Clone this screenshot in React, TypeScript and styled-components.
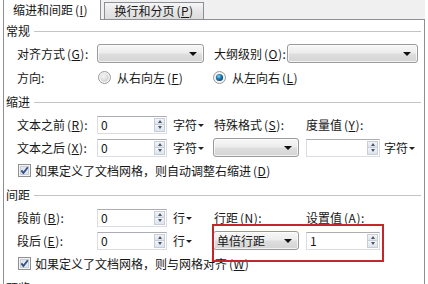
import React, { FC, ReactNode } from 'react';
import styled, { createGlobalStyle } from 'styled-components';

const GlobalStyle = createGlobalStyle`
  html, body {
    margin: 0;
    padding: 0;
    background: #ffffff;
  }
  body {
    font-family: 'Noto Sans CJK SC', 'Noto Sans', sans-serif;
    font-size: 12px;
    color: #161616;
  }
`;

const Dialog = styled.div`
  position: relative;
  width: 428px;
  height: 284px;
  overflow: hidden;
  padding-left: 3px;
  box-sizing: border-box;
  background: #ffffff;
`;

const TabStrip = styled.div`
  display: flex;
  align-items: flex-end;
  width: 422px;
  height: 19px;
  background: #f0f0f0;
  border-bottom: 1px solid #8c8f96;
`;

const ActiveTab = styled.div`
  position: relative;
  width: 98px;
  height: 20px;
  margin-bottom: -1px;
  box-sizing: border-box;
  border-left: 1px solid #8c8f96;
  border-right: 1px solid #8c8f96;
  background: #ffffff;
  display: flex;
  align-items: center;
  padding-left: 9px;
  line-height: 16px;
  white-space: nowrap;
`;

const Tab = styled.div`
  width: 100px;
  height: 17px;
  margin-left: 3px;
  box-sizing: border-box;
  border: 1px solid #8c8f96;
  border-bottom: none;
  background: linear-gradient(#f6f6f6, #e6e6e6 50%, #dcdcdc);
  display: flex;
  align-items: center;
  justify-content: center;
  line-height: 15px;
  white-space: nowrap;
`;

const Panel = styled.div`
  width: 422px;
  height: 270px;
  box-sizing: border-box;
  border-left: 1px solid #8c8f96;
  border-right: 1px solid #8c8f96;
  padding: 3px 3px 0 0;
  display: flex;
  flex-direction: column;
  gap: 7px;
`;

const Section = styled.div`
  display: flex;
  flex-direction: column;
  gap: 5px;
`;

const Heading = styled.div`
  display: flex;
  align-items: center;
  gap: 4px;
  height: 16px;
  line-height: 16px;
  padding-left: 2px;

  &::after {
    content: '';
    flex: 1;
    height: 1px;
    background: #c2c4c8;
  }
`;

const Rows = styled.div<{ $gap: number }>`
  display: grid;
  grid-template-columns: 80px 117px 92px 1fr;
  grid-auto-rows: 19px;
  row-gap: ${(p) => p.$gap}px;
  margin-left: 13px;
  align-items: center;
`;

const Label = styled.span`
  white-space: nowrap;
  line-height: 16px;
`;

const Acc = styled.span`
  margin-left: 2px;
  letter-spacing: 0.5px;

  u {
    text-underline-offset: 1px;
  }
`;

const Cell = styled.div<{ $shift?: number; $gap?: number }>`
  display: flex;
  align-items: center;
  gap: ${(p) => p.$gap ?? 6}px;
  margin-left: ${(p) => p.$shift ?? 0}px;
  white-space: nowrap;
`;

const WideCell = styled.div`
  grid-column: 3 / span 2;
  display: flex;
  align-items: center;
  white-space: nowrap;
`;

const FullRow = styled.div`
  grid-column: 1 / -1;
  display: flex;
  align-items: center;
  gap: 4px;
  padding-left: 1px;
  white-space: nowrap;
`;

const FixedLabel = styled(Label)<{ $width: number }>`
  display: inline-block;
  width: ${(p) => p.$width}px;
`;

const SelectBox = styled.div<{ $width: number }>`
  width: ${(p) => p.$width}px;
  height: 19px;
  box-sizing: border-box;
  border: 1px solid #9a9a9a;
  border-radius: 3px;
  background: linear-gradient(#f7f7f7, #ececec 48%, #dedede 52%, #d4d4d4);
  box-shadow: inset 0 0 0 1px rgba(255, 255, 255, 0.7);
  display: flex;
  align-items: center;
  padding: 0 6px 0 3px;
  line-height: 16px;

  &::after {
    content: '';
    margin-left: auto;
    border-left: 4px solid transparent;
    border-right: 4px solid transparent;
    border-top: 4px solid #111111;
  }
`;

const SpinField = styled.div<{ $width: number }>`
  width: ${(p) => p.$width}px;
  height: 18px;
  box-sizing: border-box;
  border: 1px solid #dadde2;
  border-top-color: #abadb3;
  background: #ffffff;
  display: flex;
  align-items: center;
  justify-content: space-between;
  padding: 0 1px 0 3px;
  line-height: 16px;
`;

const SpinButtons = styled.div`
  display: flex;
  flex-direction: column;
  width: 11px;
  height: 14px;
  border: 1px solid #c7ced8;
  box-sizing: border-box;
`;

const SpinHalf = styled.div<{ $down?: boolean }>`
  flex: 1;
  display: flex;
  align-items: center;
  justify-content: center;
  background: linear-gradient(#f2f5f9, #dce4ed);
  border-top: ${(p) => (p.$down ? '1px solid #c7ced8' : 'none')};

  &::after {
    content: '';
    border-left: 2.5px solid transparent;
    border-right: 2.5px solid transparent;
    ${(p) => (p.$down ? 'border-top: 3px solid #4e5560;' : 'border-bottom: 3px solid #4e5560;')}
  }
`;

const Unit = styled.span`
  display: inline-flex;
  align-items: center;
  gap: 1px;
  line-height: 16px;

  &::after {
    content: '';
    border-left: 3px solid transparent;
    border-right: 3px solid transparent;
    border-top: 3px solid #222222;
    margin-top: 1px;
  }
`;

const Highlight = styled.div`
  position: absolute;
  left: 212px;
  top: 224px;
  width: 172px;
  height: 38px;
  box-sizing: border-box;
  border: 2px solid #c4262d;
  pointer-events: none;
`;

const Text: FC<{ label: string; acc?: string; colon?: boolean }> = ({ label, acc, colon }) => (
  <Label>
    {label}
    {acc && (
      <Acc>
        (<u>{acc}</u>)
      </Acc>
    )}
    {colon && ':'}
  </Label>
);

const Spin: FC<{ width: number; value?: string }> = ({ width, value }) => (
  <SpinField $width={width}>
    <span>{value}</span>
    <SpinButtons>
      <SpinHalf />
      <SpinHalf $down />
    </SpinButtons>
  </SpinField>
);

const Radio: FC<{ checked?: boolean }> = ({ checked }) => (
  <svg width="13" height="13" viewBox="0 0 13 13">
    <defs>
      <radialGradient id={checked ? 'radioOn' : 'radioOff'} cx="0.4" cy="0.35" r="0.7">
        {checked ? (
          <>
            <stop offset="0" stopColor="#8fd3f5" />
            <stop offset="0.5" stopColor="#1a7ab5" />
            <stop offset="1" stopColor="#0c3f66" />
          </>
        ) : (
          <>
            <stop offset="0" stopColor="#f6f6f6" />
            <stop offset="1" stopColor="#cfcfcf" />
          </>
        )}
      </radialGradient>
    </defs>
    <circle cx="6.5" cy="6.5" r="6" fill="#f4f4f4" stroke="#9a9a9a" />
    <circle cx="6.5" cy="6.5" r={checked ? 3.6 : 4.2} fill={`url(#${checked ? 'radioOn' : 'radioOff'})`} />
  </svg>
);

const CheckBox: FC = () => (
  <svg width="13" height="13" viewBox="0 0 13 13">
    <rect x="0.5" y="0.5" width="12" height="12" fill="#f4f4f4" stroke="#8e8f8f" />
    <rect x="2.5" y="2.5" width="8" height="8" fill="#e3e7ec" stroke="#c9ced4" />
    <path d="M3.4 6.4 L5.4 9 L9.8 3.2" fill="none" stroke="#2f4f86" strokeWidth="1.8" />
  </svg>
);

const Choice: FC<{ checked?: boolean; children: ReactNode }> = ({ checked, children }) => (
  <>
    <Radio checked={checked} />
    {children}
  </>
);

const App: FC = () => (
  <>
    <GlobalStyle />
    <Dialog>
      <TabStrip>
        <ActiveTab>
          <Text label="缩进和间距" acc="I" />
        </ActiveTab>
        <Tab>
          <Text label="换行和分页" acc="P" />
        </Tab>
      </TabStrip>
      <Panel>
        <Section>
          <Heading>常规</Heading>
          <Rows $gap={5}>
            <Text label="对齐方式" acc="G" colon />
            <Cell>
              <SelectBox $width={107} />
            </Cell>
            <WideCell>
              <FixedLabel $width={73}>
                大纲级别
                <Acc>
                  (<u>O</u>)
                </Acc>
                :
              </FixedLabel>
              <SelectBox $width={131} />
            </WideCell>
            <Text label="方向" colon />
            <Cell $shift={1}>
              <Choice>
                <Text label="从右向左" acc="F" />
              </Choice>
            </Cell>
            <WideCell>
              <Cell $shift={-1}>
                <Choice checked>
                  <Text label="从左向右" acc="L" />
                </Choice>
              </Cell>
            </WideCell>
          </Rows>
        </Section>

        <Section>
          <Heading>缩进</Heading>
          <Rows $gap={4}>
            <Text label="文本之前" acc="R" colon />
            <Cell>
              <Spin width={70} value="0" />
              <Unit>字符</Unit>
            </Cell>
            <Text label="特殊格式" acc="S" colon />
            <Text label="度量值" acc="Y" colon />
            <Text label="文本之后" acc="X" colon />
            <Cell>
              <Spin width={70} value="0" />
              <Unit>字符</Unit>
            </Cell>
            <Cell $shift={-1}>
              <SelectBox $width={86} />
            </Cell>
            <Cell $gap={4}>
              <Spin width={74} />
              <Unit>字符</Unit>
            </Cell>
            <FullRow>
              <CheckBox />
              <Text label="如果定义了文档网格，则自动调整右缩进" acc="D" />
            </FullRow>
          </Rows>
        </Section>

        <Section>
          <Heading>间距</Heading>
          <Rows $gap={4}>
            <Text label="段前" acc="B" colon />
            <Cell>
              <Spin width={70} value="0" />
              <Unit>行</Unit>
            </Cell>
            <Text label="行距" acc="N" colon />
            <Text label="设置值" acc="A" colon />
            <Text label="段后" acc="E" colon />
            <Cell>
              <Spin width={70} value="0" />
              <Unit>行</Unit>
            </Cell>
            <Cell $shift={-1}>
              <SelectBox $width={86}>单倍行距</SelectBox>
            </Cell>
            <Cell>
              <Spin width={74} value="1" />
            </Cell>
            <FullRow>
              <CheckBox />
              <Text label="如果定义了文档网格，则与网格对齐" acc="W" />
            </FullRow>
          </Rows>
        </Section>

        <Section>
          <Heading>预览</Heading>
        </Section>
      </Panel>
      <Highlight />
    </Dialog>
  </>
);

export default App;
